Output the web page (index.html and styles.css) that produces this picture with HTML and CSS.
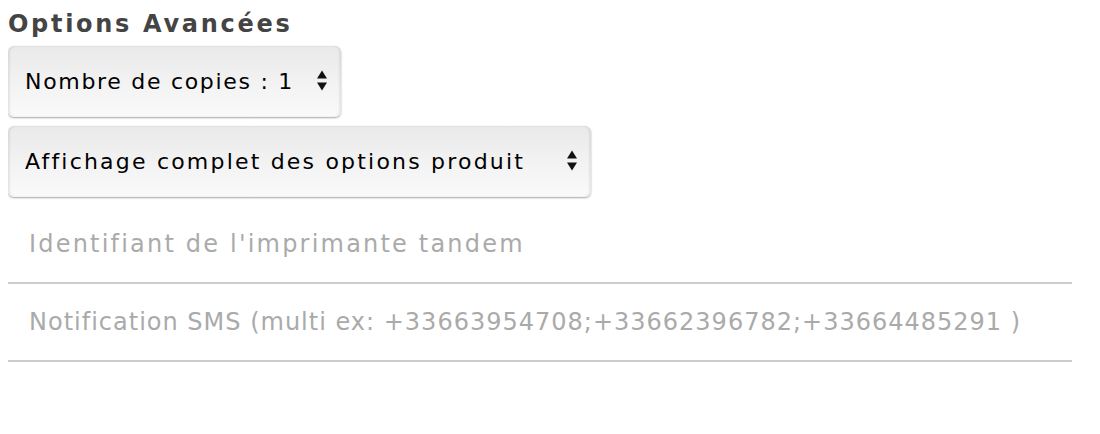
FILE: index.html
```html
<!DOCTYPE html>
<html lang="fr">
<head>
<meta charset="utf-8">
<title>Options Avancées</title>
<link rel="stylesheet" href="styles.css">
</head>
<body>
<section class="advanced">
  <h3 class="title">Options Avancées</h3>
  <div class="select-wrap select-copies">
    <select class="select">
      <option>Nombre de copies : 1</option>
    </select>
    <svg class="arrows" width="10" height="21" viewBox="0 0 10 21"><path d="M5 0.5 L10 8.5 L0 8.5 Z M0 12.5 L10 12.5 L5 20.5 Z" fill="#111"/></svg>
  </div>
  <div class="select-wrap select-display">
    <select class="select">
      <option>Affichage complet des options produit</option>
    </select>
    <svg class="arrows" width="10" height="21" viewBox="0 0 10 21"><path d="M5 0.5 L10 8.5 L0 8.5 Z M0 12.5 L10 12.5 L5 20.5 Z" fill="#111"/></svg>
  </div>
  <input class="field field-tandem" type="text" placeholder="Identifiant de l'imprimante tandem">
  <input class="field field-sms" type="text" placeholder="Notification SMS (multi ex: +33663954708;+33662396782;+33664485291 )">
</section>
</body>
</html>
```
FILE: styles.css
```css
body {
  margin: 8px;
  background: #fff;
  font-family: "DejaVu Sans", Inter, sans-serif;
}
.advanced {
  display: flex;
  flex-direction: column;
  align-items: flex-start;
  width: 1064px;
}
.title {
  margin: 0 0 5px 0;
  font-size: 24px;
  line-height: 33px;
  font-weight: 700;
  letter-spacing: 2.7px;
  color: #444;
}
.select-wrap {
  position: relative;
  margin-bottom: 9px;
}
.select {
  -webkit-appearance: none;
  appearance: none;
  display: block;
  height: 71px;
  border: none;
  border-radius: 6px;
  padding: 0 40px 0 17px;
  font-family: inherit;
  font-size: 22px;
  color: #000;
  background: linear-gradient(#e9e9e9, #f3f3f3 55%, #fafafa);
  box-shadow: 0 1px 2px rgba(0,0,0,0.35), inset 2px 0 2px rgba(0,0,0,0.07), inset -2px 0 2px rgba(0,0,0,0.07);
  outline: none;
}
.select-copies .select { width: 333px; letter-spacing: 1.7px; }
.select-display .select { width: 583px; letter-spacing: 2.2px; }
.arrows {
  position: absolute;
  right: 14px;
  top: 24px;
  pointer-events: none;
}
.field {
  display: block;
  box-sizing: border-box;
  width: 1064px;
  height: 78px;
  margin: 0;
  border: none;
  border-bottom: 2px solid #ccc;
  padding: 0 0 0 21px;
  font-family: inherit;
  font-size: 24px;
  color: #333;
  outline: none;
  background: transparent;
}
.field-tandem { letter-spacing: 2.2px; }
.field-sms { letter-spacing: 1px; }
.field::placeholder { color: #aaa; }
```
